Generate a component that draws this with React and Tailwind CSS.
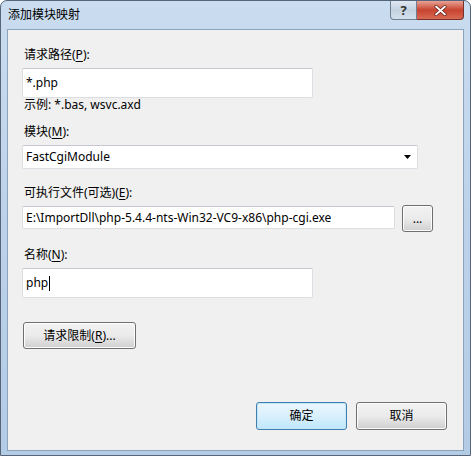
import React from 'react';

const font = { fontFamily: '"Noto Sans", "Noto Sans CJK SC", sans-serif' };

const Key = ({ children }) => <span className="underline underline-offset-2">{children}</span>;

const Label = ({ children, className = '' }) => (
  <div className={`h-[16px] leading-[16px] text-[12px] text-[#000] pl-[2px] ${className}`}>{children}</div>
);

const TextBox = ({ children, className = '' }) => (
  <div
    className={`flex items-center bg-white border border-[#dadde2] border-t-[#c4c8ce] rounded-[2px] pl-[3px] text-[12px] text-black ${className}`}
  >
    {children}
  </div>
);

const Button = ({ children, className = '', isDefault = false }) => (
  <div
    className={`flex items-center justify-center rounded-[3px] border text-[12px] text-black ${
      isDefault
        ? 'border-[#3c7fb1] bg-gradient-to-b from-[#eaf6fd] via-[#d9f0fc] to-[#bee6fd] shadow-[inset_0_0_0_1px_#c6e6f7]'
        : 'border-[#707070] bg-gradient-to-b from-[#f2f2f2] via-[#ebebeb] to-[#cfcfcf] shadow-[inset_0_0_0_1px_#fcfcfc]'
    } ${className}`}
  >
    {children}
  </div>
);

export default function App() {
  return (
    <div className="w-[471px] h-[456px] bg-white" style={font}>
      <div className="w-[471px] h-[456px] flex flex-col rounded-t-[7px] border border-[#56657a] bg-gradient-to-b from-[#cadcef] via-[#bcd2ea] to-[#b4cbe6] overflow-hidden">
        {/* Title bar */}
        <div className="h-[28px] flex items-start relative">
          <div className="pl-[7px] pt-[6px] text-[12px] leading-[16px] text-black">添加模块映射</div>
          <div className="ml-auto mr-[6px] flex">
            <div className="w-[27px] h-[19px] rounded-bl-[4px] border border-t-0 border-[#6f7f93] bg-gradient-to-b from-[#dfe8f2] via-[#c4d2e0] to-[#d3dfec] flex items-center justify-center text-[13px] leading-none text-[#333] font-bold">
              ?
            </div>
            <div className="w-[47px] h-[19px] rounded-br-[4px] border border-t-0 border-l-0 border-[#7a3026] bg-gradient-to-b from-[#e7a195] via-[#c8432f] to-[#d76a54] flex items-center justify-center">
              <svg width="13" height="11" viewBox="0 0 13 11">
                <path d="M2 1.5 L11 9.5 M11 1.5 L2 9.5" stroke="#5b1a12" strokeWidth="3.2" strokeLinecap="round" />
                <path d="M2 1.5 L11 9.5 M11 1.5 L2 9.5" stroke="#ffffff" strokeWidth="1.8" strokeLinecap="round" />
              </svg>
            </div>
          </div>
        </div>

        {/* Content */}
        <div className="flex-1 mx-[6px] mb-[4px] border border-[#8da2bb] bg-[#f0f0f0] flex flex-col pl-[14px] pr-[16px]">
          <Label className="mt-[17px]">
            请求路径(<Key>P</Key>):
          </Label>
          <TextBox className="mt-[5px] w-[291px] h-[30px]">*.php</TextBox>
          <div className="h-[13px] leading-[13px] text-[12px] pl-[2px] text-black">示例: *.bas, wsvc.axd</div>

          <Label className="mt-[13px]">
            模块(<Key>M</Key>):
          </Label>
          <TextBox className="mt-[5px] w-[396px] h-[24px] pr-[6px]">
            <span>FastCgiModule</span>
            <svg className="ml-auto" width="7" height="4" viewBox="0 0 7 4">
              <path d="M0 0 H7 L3.5 4 Z" fill="#000" />
            </svg>
          </TextBox>

          <Label className="mt-[16px]">
            可执行文件(可选)(<Key>E</Key>):
          </Label>
          <div className="mt-[4px] flex items-start gap-[7px]">
            <TextBox className="mt-[1px] w-[373px] h-[23px]">E:\ImportDll\php-5.4.4-nts-Win32-VC9-x86\php-cgi.exe</TextBox>
            <Button className="w-[31px] h-[27px] text-[9px] leading-none">...</Button>
          </div>

          <Label className="mt-[15px]">
            名称(<Key>N</Key>):
          </Label>
          <TextBox className="mt-[5px] w-[291px] h-[30px]">
            <span>php</span>
            <span className="inline-block w-[1px] h-[15px] bg-black ml-[1px]" />
          </TextBox>

          <Button className="mt-[24px] ml-[1px] w-[113px] h-[27px]">
            请求限制(<Key>R</Key>)...
          </Button>

          <div className="mt-auto mb-[20px] flex justify-end gap-[9px]">
            <Button isDefault className="w-[91px] h-[28px]">确定</Button>
            <Button className="w-[91px] h-[28px]">取消</Button>
          </div>
        </div>
      </div>
    </div>
  );
}
